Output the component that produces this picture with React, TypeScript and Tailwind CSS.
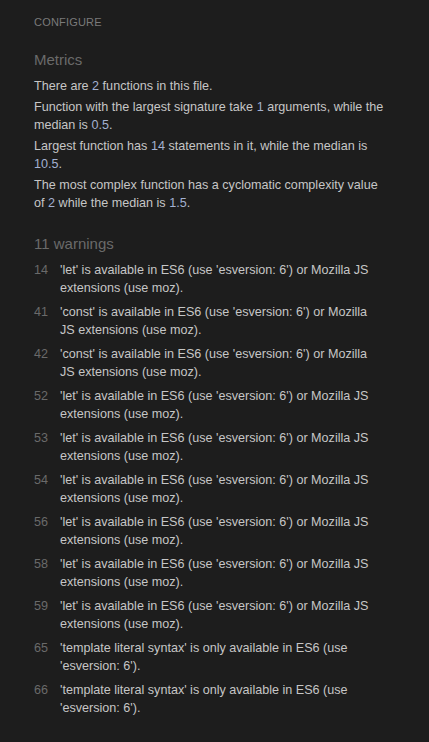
const warnings: [number, string][] = [
  [14, "'let' is available in ES6 (use 'esversion: 6') or Mozilla JS extensions (use moz)."],
  [41, "'const' is available in ES6 (use 'esversion: 6') or Mozilla JS extensions (use moz)."],
  [42, "'const' is available in ES6 (use 'esversion: 6') or Mozilla JS extensions (use moz)."],
  [52, "'let' is available in ES6 (use 'esversion: 6') or Mozilla JS extensions (use moz)."],
  [53, "'let' is available in ES6 (use 'esversion: 6') or Mozilla JS extensions (use moz)."],
  [54, "'let' is available in ES6 (use 'esversion: 6') or Mozilla JS extensions (use moz)."],
  [56, "'let' is available in ES6 (use 'esversion: 6') or Mozilla JS extensions (use moz)."],
  [58, "'let' is available in ES6 (use 'esversion: 6') or Mozilla JS extensions (use moz)."],
  [59, "'let' is available in ES6 (use 'esversion: 6') or Mozilla JS extensions (use moz)."],
  [65, "'template literal syntax' is only available in ES6 (use 'esversion: 6')."],
  [66, "'template literal syntax' is only available in ES6 (use 'esversion: 6')."],
];

function Num({ children }: { children: React.ReactNode }) {
  return <span className="text-[#a3b1d1]">{children}</span>;
}

export default function App() {
  return (
    <div className="min-h-[742px] w-[429px] bg-[#1d1d1d] pl-[34px] pt-[15px] pb-10 font-['Liberation_Sans',Arial,sans-serif] text-[12.6px] leading-[18px] text-[#c6c6c6]">
      <div className="text-[11px] leading-[14px] tracking-[0.2px] text-[#7a7a7a]">CONFIGURE</div>

      <h2 className="mt-[22px] text-[15px] leading-[18px] text-[#6a6a6a]">Metrics</h2>
      <div className="mt-[8px] flex w-[353px] flex-col gap-[3px]">
        <p>
          There are <Num>2</Num> functions in this file.
        </p>
        <p>
          Function with the largest signature take <Num>1</Num> arguments, while the median is <Num>0.5</Num>.
        </p>
        <p>
          Largest function has <Num>14</Num> statements in it, while the median is <Num>10.5</Num>.
        </p>
        <p>
          The most complex function has a cyclomatic complexity value of <Num>2</Num> while the median is{' '}
          <Num>1.5</Num>.
        </p>
      </div>

      <h2 className="mt-[23px] text-[15px] leading-[18px] text-[#6a6a6a]">11 warnings</h2>
      <div className="mt-[8px] flex w-[344px] flex-col gap-[6px]">
        {warnings.map(([line, msg], i) => (
          <div key={i} className="flex">
            <span className="w-[26px] shrink-0 text-[#6a6a6a]">{line}</span>
            <span>{msg}</span>
          </div>
        ))}
      </div>
    </div>
  );
}
